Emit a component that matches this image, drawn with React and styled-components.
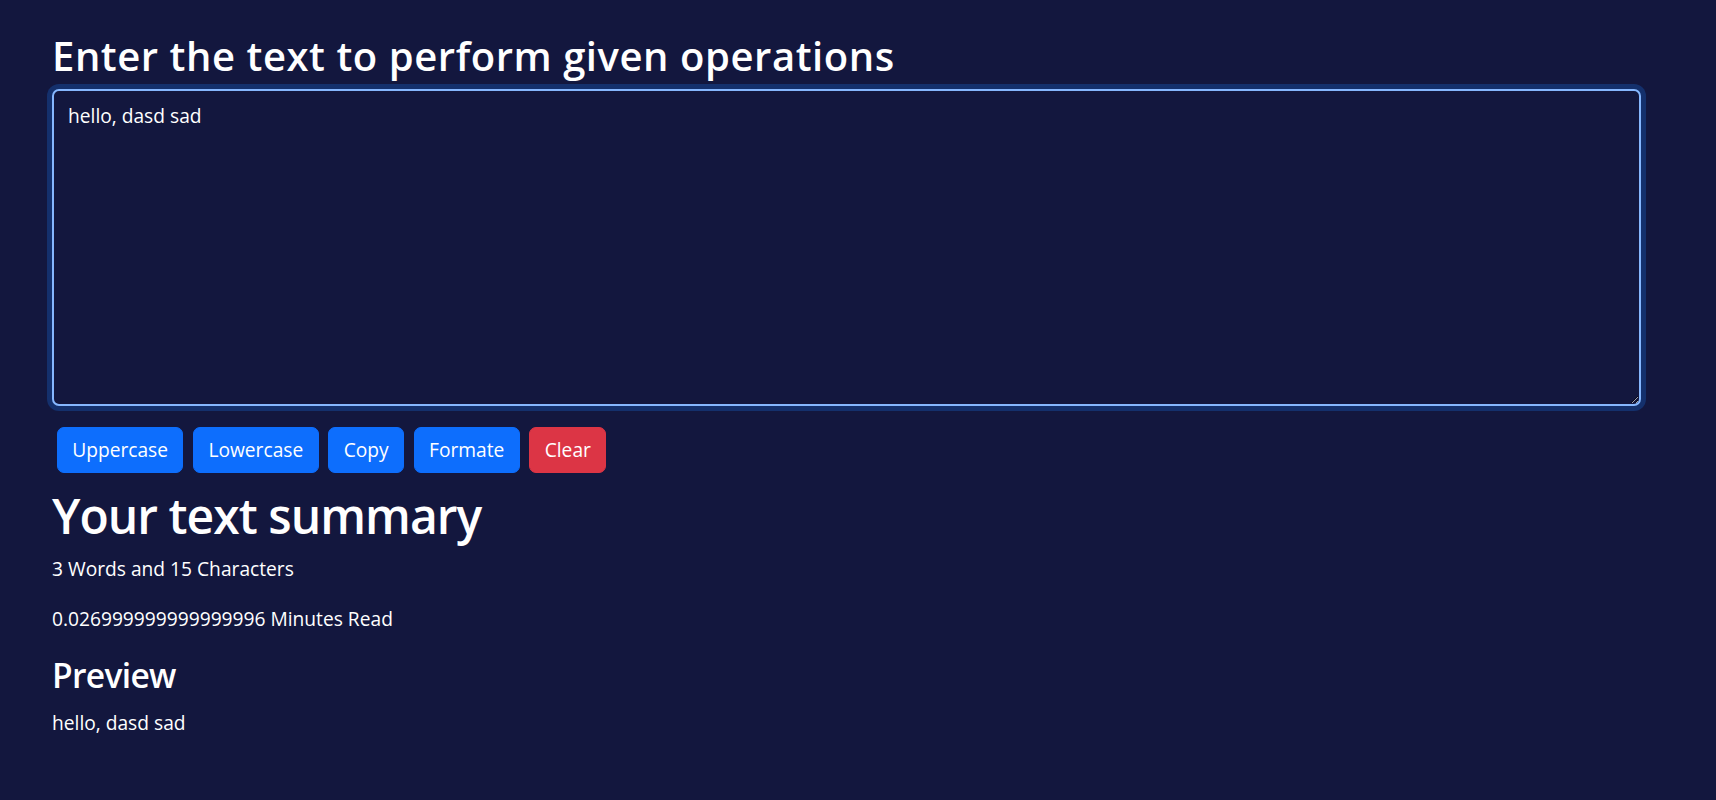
import React, { useState } from "react";
import styled, { createGlobalStyle } from "styled-components";

const GlobalStyle = createGlobalStyle`
  html, body {
    margin: 0;
    padding: 0;
    background-color: #13173e;
  }
  body {
    font-family: "Open Sans", "Noto Sans", sans-serif;
    color: #ffffff;
  }
`;

const Page = styled.div`
  min-height: 800px;
  background-color: #13173e;
  padding: 33px 75px 0 52px;
  box-sizing: border-box;
`;

const Heading = styled.h2`
  font-size: ${({ $small }) => ($small ? "33.6px" : "40px")};
  font-weight: 600;
  line-height: ${({ $small }) => ($small ? "40px" : "46px")};
  margin: 0 0 ${({ $small }) => ($small ? "14px" : "10px")};
  letter-spacing: ${({ $small }) => ($small ? "-0.02em" : "0.014em")};
`;

const BigHeading = styled.h1`
  font-size: 48px;
  font-weight: 600;
  line-height: 58px;
  margin: 0 0 10px;
  letter-spacing: -0.02em;
`;

const TextBox = styled.textarea`
  display: block;
  width: 100%;
  height: 317px;
  box-sizing: border-box;
  margin: 0 0 21px;
  padding: 11px 14px 7px;
  font-family: "Open Sans", "Noto Sans", sans-serif;
  font-size: 19.2px;
  line-height: 1.5;
  color: #ffffff;
  background-color: #13173e;
  border: 2px solid #86b7fe;
  border-radius: 7px;
  box-shadow: 0 0 0 5px #14306c;
  outline: none;
  resize: vertical;
`;

const ButtonRow = styled.div`
  display: flex;
  flex-wrap: wrap;
  margin-bottom: 14px;
`;

const Button = styled.button`
  margin: 0 4.8px 0;
  padding: 7.2px 14.4px;
  height: 46px;
  font-family: "Open Sans", "Noto Sans", sans-serif;
  font-size: 19.2px;
  line-height: 1.5;
  color: #ffffff;
  background-color: ${({ $danger }) => ($danger ? "#dc3545" : "#0d6efd")};
  border: 1.2px solid ${({ $danger }) => ($danger ? "#dc3545" : "#0d6efd")};
  border-radius: 7px;
  cursor: pointer;
`;

const Text = styled.p`
  font-size: 19.2px;
  line-height: 1.5;
  margin: 0 0 21px;
`;

const App = () => {
  const [text, setText] = useState("hello, dasd sad");

  const words = text.split(/\s+/).filter((w) => w.length !== 0).length;

  return (
    <>
      <GlobalStyle />
      <Page>
        <Heading>Enter the text to perform given operations</Heading>
        <TextBox value={text} onChange={(e) => setText(e.target.value)} />
        <ButtonRow>
          <Button onClick={() => setText(text.toUpperCase())}>Uppercase</Button>
          <Button onClick={() => setText(text.toLowerCase())}>Lowercase</Button>
          <Button onClick={() => navigator.clipboard?.writeText(text)}>Copy</Button>
          <Button onClick={() => setText(text.split(/\s+/).join(" "))}>Formate</Button>
          <Button $danger onClick={() => setText("")}>
            Clear
          </Button>
        </ButtonRow>
        <BigHeading>Your text summary</BigHeading>
        <Text>
          {words} Words and {text.length} Characters
        </Text>
        <Text>0.026999999999999996 Minutes Read</Text>
        <Heading $small>Preview</Heading>
        <Text>{text.length > 0 ? text : "Nothing to preview!"}</Text>
      </Page>
    </>
  );
};

export default App;
